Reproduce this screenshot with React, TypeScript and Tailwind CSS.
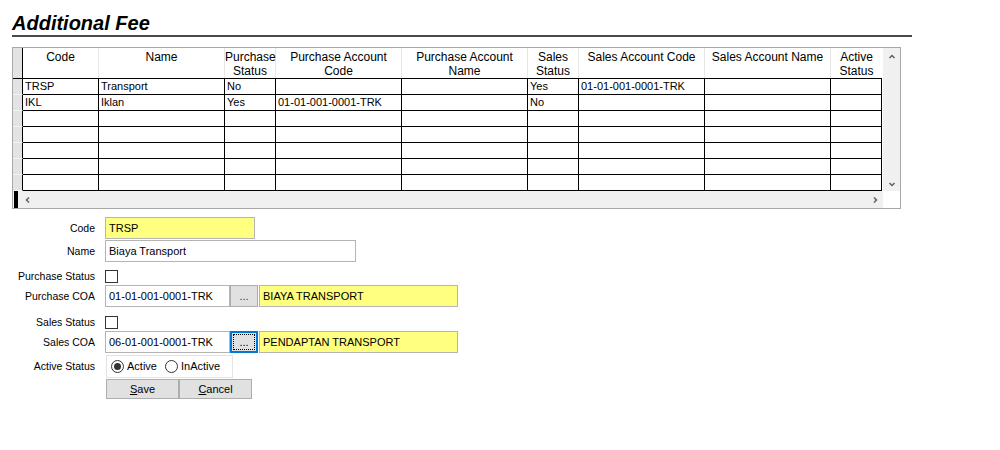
import React from "react";

const font = "font-['Liberation_Sans',Arial,sans-serif]";

const columns = [
  { w: "w-[76px]", head: ["Code"] },
  { w: "w-[126px]", head: ["Name"] },
  { w: "w-[51px]", head: ["Purchase", "Status"] },
  { w: "w-[126px]", head: ["Purchase Account", "Code"] },
  { w: "w-[126px]", head: ["Purchase Account", "Name"] },
  { w: "w-[51px]", head: ["Sales", "Status"] },
  { w: "w-[126px]", head: ["Sales Account Code"] },
  { w: "w-[126px]", head: ["Sales Account Name"] },
  { w: "w-[51px]", head: ["Active", "Status"] },
];

const rows: string[][] = [
  ["TRSP", "Transport", "No", "", "", "Yes", "01-01-001-0001-TRK", "", ""],
  ["IKL", "Iklan", "Yes", "01-01-001-0001-TRK", "", "No", "", "", ""],
  ["", "", "", "", "", "", "", "", ""],
  ["", "", "", "", "", "", "", "", ""],
  ["", "", "", "", "", "", "", "", ""],
  ["", "", "", "", "", "", "", "", ""],
  ["", "", "", "", "", "", "", "", ""],
];

function Chevron({ dir }: { dir: "up" | "down" | "left" | "right" }) {
  const paths = {
    up: "M1.5 5 L4 2.5 L6.5 5",
    down: "M1.5 3 L4 5.5 L6.5 3",
    left: "M5 1.5 L2.5 4 L5 6.5",
    right: "M3 1.5 L5.5 4 L3 6.5",
  };
  return (
    <svg width="8" height="8" viewBox="0 0 8 8" className="shrink-0">
      <path d={paths[dir]} fill="none" stroke="#606060" strokeWidth="1.5" />
    </svg>
  );
}

function DataGrid() {
  return (
    <div className="ml-[12px] mt-[10px] w-[889px] border border-[#a8a8a8] bg-white">
      <div className="flex h-[143px]">
        <div className="w-[869px]">
          <div className="flex h-[31px] border-b border-black">
            <div className="w-[10px] shrink-0 border-r border-black bg-[#e3e3e3]" />
            {columns.map((c, i) => (
              <div
                key={i}
                className={`${c.w} shrink-0 border-r border-[#e6e6e6] pt-[2px] text-center text-[12px] leading-[14px] text-black last:border-r-0`}
              >
                {c.head.map((h, j) => (
                  <div key={j} className="whitespace-nowrap">
                    {h}
                  </div>
                ))}
              </div>
            ))}
          </div>
          {rows.map((r, i) => (
            <div key={i} className="flex h-[16px]">
              <div className="w-[10px] shrink-0 border-r border-b border-r-black border-b-[#f4f4f4] bg-[#e3e3e3]" />
              {r.map((v, j) => (
                <div
                  key={j}
                  className={`${columns[j].w} shrink-0 overflow-hidden whitespace-nowrap border-r border-b border-black pl-[2px] text-[11px] leading-[15px] text-black`}
                >
                  {v}
                </div>
              ))}
            </div>
          ))}
        </div>
        <div className="w-[1px] bg-white" />
        <div className="flex w-[17px] flex-col items-center justify-between bg-[#f0f0f0] pt-[5px] pb-[3px]">
          <Chevron dir="up" />
          <Chevron dir="down" />
        </div>
      </div>
      <div className="flex h-[17px]">
        <div className="flex w-[870px] items-center justify-between bg-[#f0f0f0] pr-[4px]">
          <div className="flex items-center">
            <div className="ml-[1px] h-[17px] w-[4px] bg-black" />
            <div className="ml-[6px]">
              <Chevron dir="left" />
            </div>
          </div>
          <Chevron dir="right" />
        </div>
        <div className="w-[17px] bg-white" />
      </div>
    </div>
  );
}

function Label({ text }: { text: string }) {
  return (
    <div className="w-[95px] shrink-0 whitespace-nowrap text-right text-[10.5px] leading-[13px] text-black">
      {text}
    </div>
  );
}

function TextBox({
  value,
  w,
  yellow,
}: {
  value: string;
  w: string;
  yellow?: boolean;
}) {
  return (
    <div
      className={`${w} flex h-[22px] shrink-0 items-center border border-[#b4b4b4] pl-[3px] text-[11px] text-black ${
        yellow ? "bg-[#ffff80]" : "bg-white"
      }`}
    >
      {value}
    </div>
  );
}

function CheckBox() {
  return <div className="h-[13px] w-[13px] shrink-0 border border-[#333333] bg-white" />;
}

function BrowseButton({ focused }: { focused?: boolean }) {
  if (focused) {
    return (
      <div className="flex h-[22px] w-[28px] shrink-0 items-center justify-center border-2 border-[#0078d7] bg-[#e1e1e1] p-[1px]">
        <div className="flex h-full w-full items-center justify-center border border-dotted border-black text-[11px] leading-none text-black">
          ...
        </div>
      </div>
    );
  }
  return (
    <div className="flex h-[22px] w-[28px] shrink-0 items-center justify-center border border-[#adadad] bg-[#e1e1e1] text-[11px] text-[#333333]">
      ...
    </div>
  );
}

function Radio({ checked, label }: { checked?: boolean; label: string }) {
  return (
    <div className="flex items-center gap-[3px]">
      <div className="flex h-[13px] w-[13px] items-center justify-center rounded-full border border-[#333333] bg-white">
        {checked && <div className="h-[7px] w-[7px] rounded-full bg-[#333333]" />}
      </div>
      <span className="text-[11px] text-black">{label}</span>
    </div>
  );
}

function FormButton({ first, rest, w }: { first: string; rest: string; w: string }) {
  return (
    <div
      className={`${w} flex h-[20px] items-center justify-center border border-[#adadad] bg-[#e1e1e1] text-[11px] text-black`}
    >
      <span className="underline underline-offset-1">{first}</span>
      {rest}
    </div>
  );
}

export default function App() {
  return (
    <div className={`h-[450px] w-[1000px] overflow-hidden bg-white ${font}`}>
      <div className="ml-[12px] w-[900px] border-b-2 border-[#4a4a4a] pt-[12px]">
        <h1 className="text-[20px] font-bold italic leading-[23px] text-black">
          Additional Fee
        </h1>
      </div>

      <DataGrid />

      <div className="mt-[8px] flex flex-col">
        <div className="flex h-[22px] items-center gap-[10px]">
          <Label text="Code" />
          <TextBox value="TRSP" w="w-[150px]" yellow />
        </div>
        <div className="mt-[1px] flex h-[22px] items-center gap-[10px]">
          <Label text="Name" />
          <TextBox value="Biaya Transport" w="w-[251px]" />
        </div>
        <div className="flex h-[23px] items-end gap-[10px] pb-[2px]">
          <Label text="Purchase Status" />
          <CheckBox />
        </div>
        <div className="flex h-[22px] items-center gap-[10px]">
          <Label text="Purchase COA" />
          <div className="flex">
            <TextBox value="01-01-001-0001-TRK" w="w-[125px]" />
            <BrowseButton />
            <div className="ml-[1px]">
              <TextBox value="BIAYA TRANSPORT" w="w-[199px]" yellow />
            </div>
          </div>
        </div>
        <div className="flex h-[24px] items-end gap-[10px] pb-[2px]">
          <Label text="Sales Status" />
          <CheckBox />
        </div>
        <div className="flex h-[22px] items-center gap-[10px]">
          <Label text="Sales COA" />
          <div className="flex">
            <TextBox value="06-01-001-0001-TRK" w="w-[125px]" />
            <BrowseButton focused />
            <div className="ml-[1px]">
              <TextBox value="PENDAPTAN TRANSPORT" w="w-[199px]" yellow />
            </div>
          </div>
        </div>
        <div className="mt-[2px] flex h-[23px] items-center gap-[10px]">
          <Label text="Active Status" />
          <div className="ml-[1px] flex h-[23px] w-[127px] items-center gap-[8px] border border-[#e3e3e3] bg-white pl-[4px]">
            <Radio checked label="Active" />
            <Radio label="InActive" />
          </div>
        </div>
        <div className="mt-[1px] flex h-[20px] items-center gap-[10px]">
          <div className="w-[95px] shrink-0" />
          <div className="ml-[1px] flex">
            <FormButton first="S" rest="ave" w="w-[73px]" />
            <FormButton first="C" rest="ancel" w="w-[73px]" />
          </div>
        </div>
      </div>
    </div>
  );
}
